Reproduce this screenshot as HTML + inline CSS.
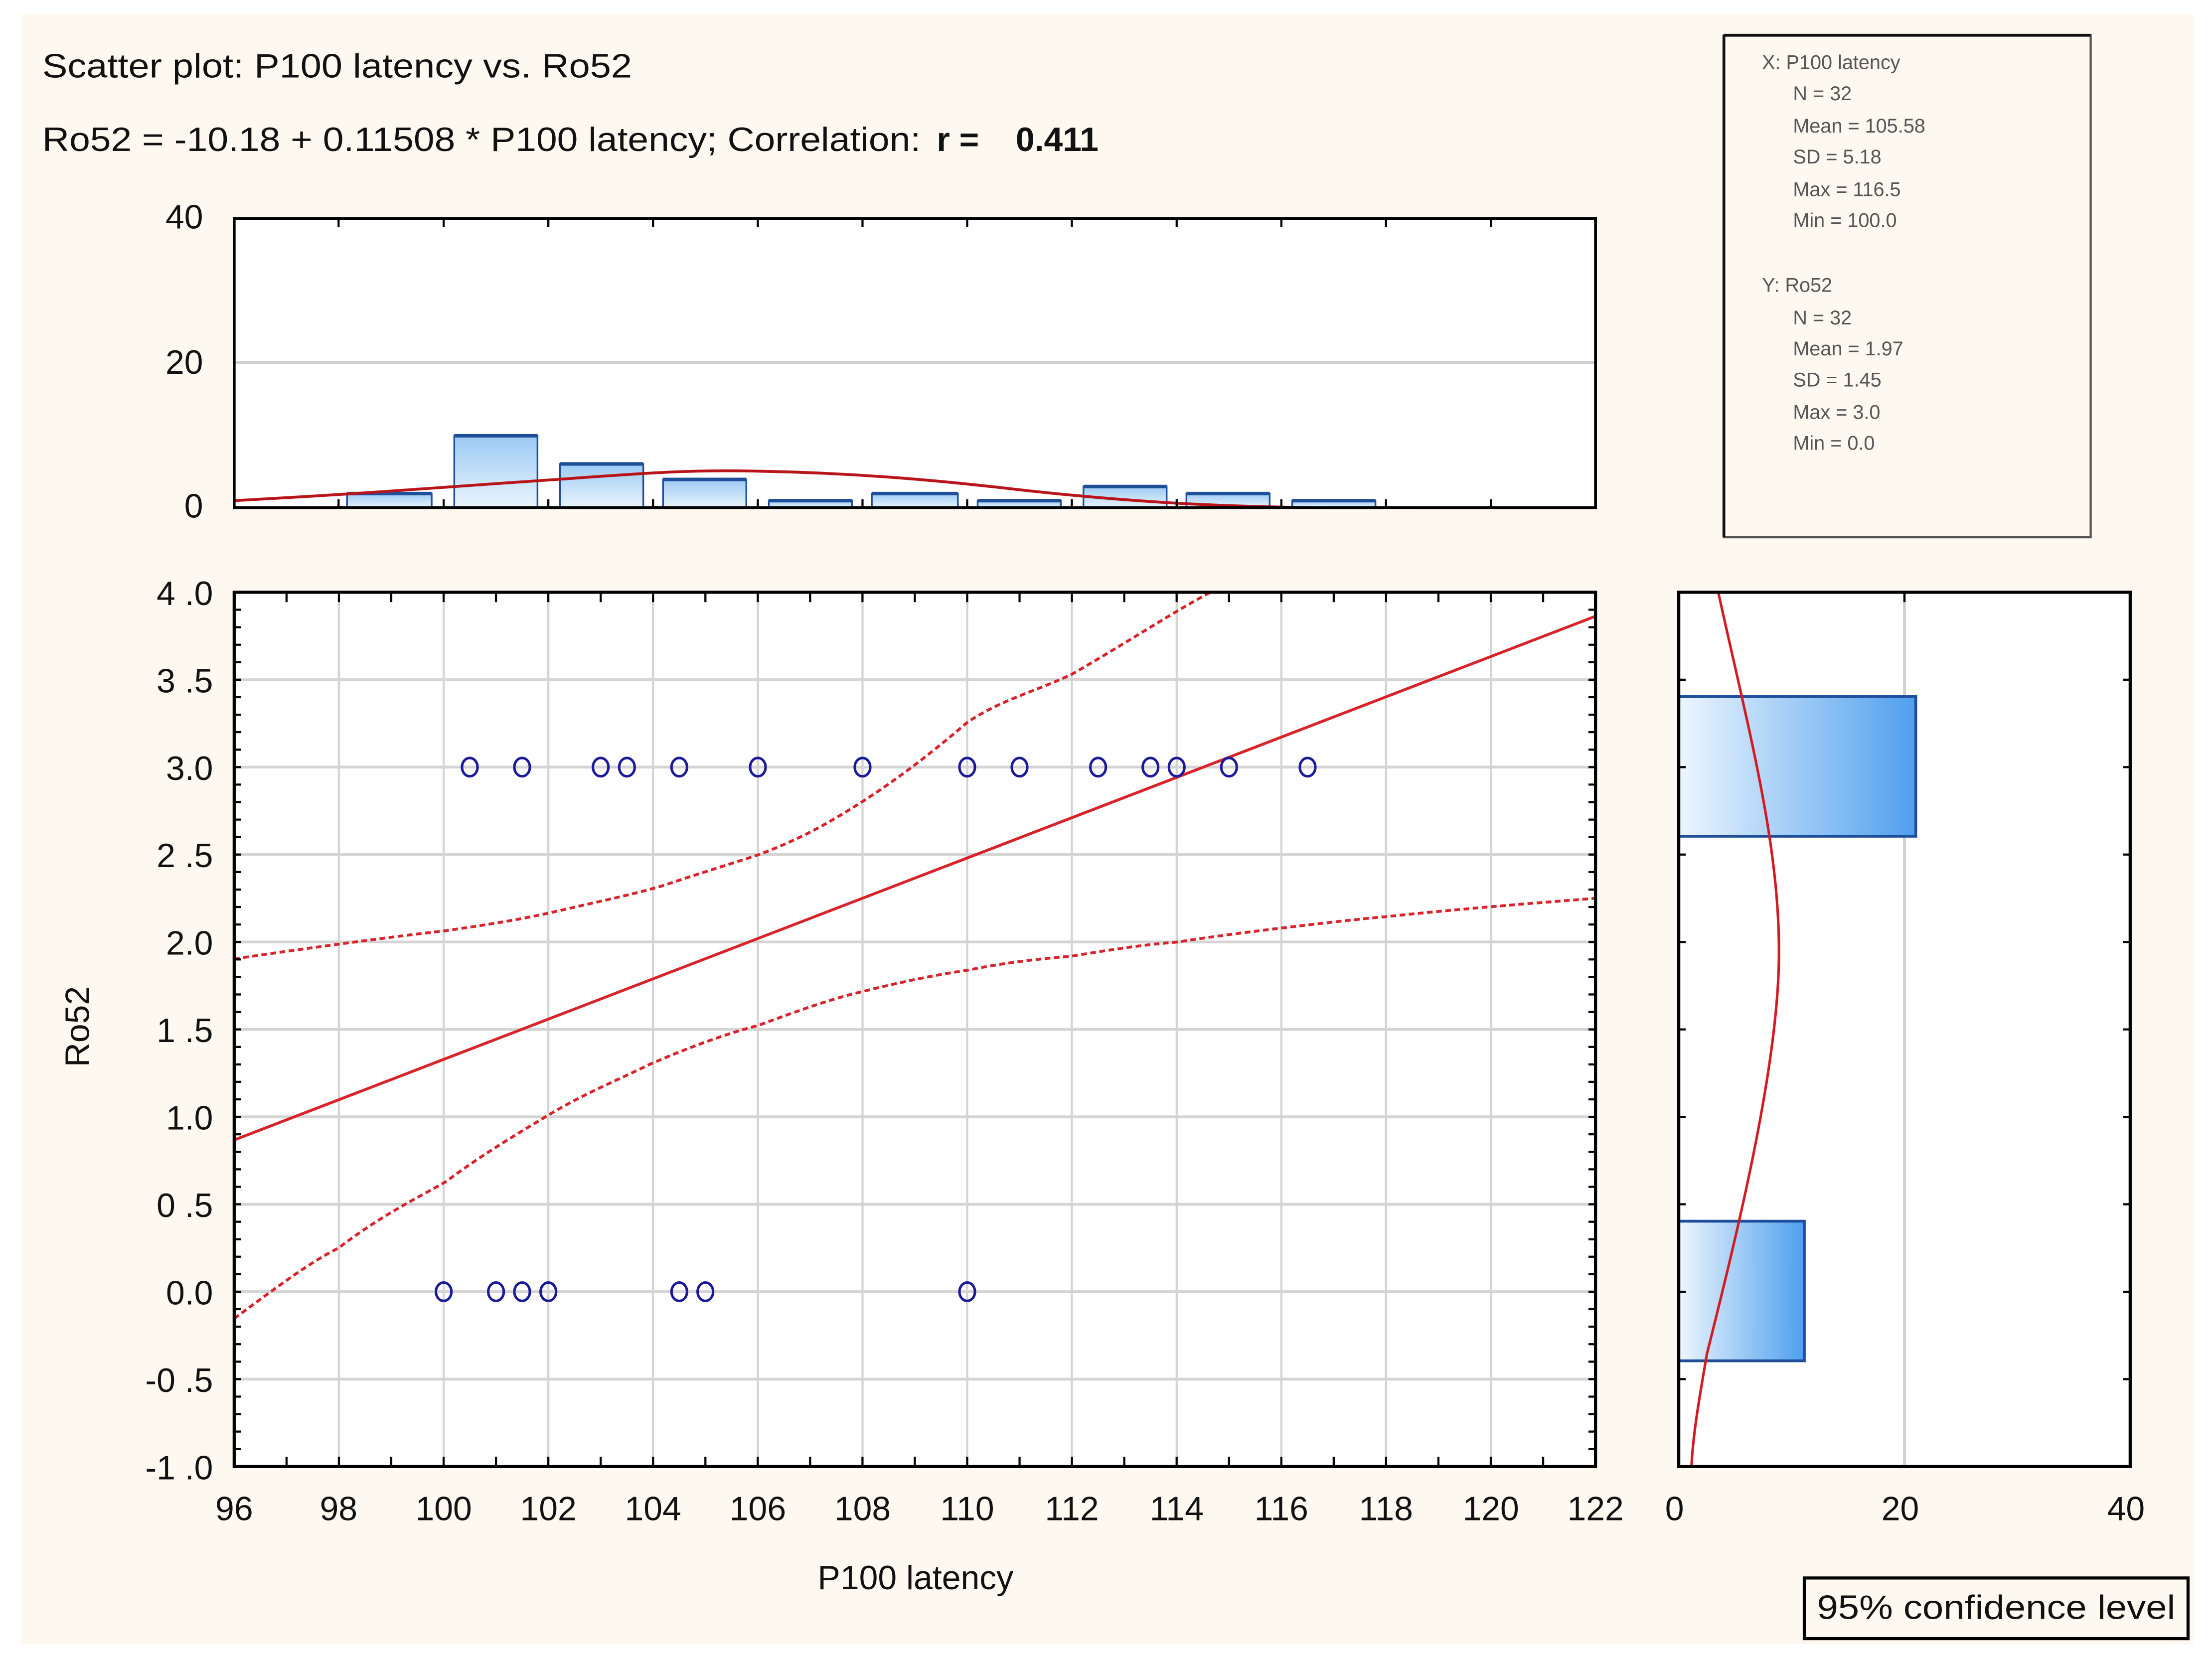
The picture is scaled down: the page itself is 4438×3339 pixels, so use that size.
<!DOCTYPE html>
<html><head><meta charset="utf-8"><style>
html,body{margin:0;padding:0;background:#fff;}
svg{display:block;}
text{font-family:"Liberation Sans",Arial,sans-serif;}
</style></head><body>
<svg width="4438" height="3339" viewBox="0 0 1568 1180" preserveAspectRatio="none" xmlns="http://www.w3.org/2000/svg">
<defs>
<linearGradient id="gv" x1="0" y1="0" x2="0" y2="1"><stop offset="0" stop-color="#9ccaf4"/><stop offset="1" stop-color="#eaf4fd"/></linearGradient>
<linearGradient id="gh" x1="0" y1="0" x2="1" y2="0"><stop offset="0" stop-color="#eef6fe"/><stop offset="1" stop-color="#4f9fee"/></linearGradient>
</defs>
<rect x="0" y="0" width="1568" height="1180" fill="#fff"/>
<rect x="15" y="10" width="1540" height="1156" fill="#fdf9f0"/>

<text x="30" y="55" font-size="24" fill="#111" textLength="418" lengthAdjust="spacingAndGlyphs">Scatter plot: P100 latency vs. Ro52</text>
<text x="30" y="107" font-size="24" fill="#111">
<tspan textLength="630" lengthAdjust="spacingAndGlyphs">Ro52 = -10.18 + 0.11508 * P100 latency; Correlation: </tspan><tspan font-weight="bold" x="664">r =</tspan><tspan font-weight="bold" x="720">0.411</tspan></text>

<!-- stats box -->
<rect x="1222" y="25" width="260" height="356" fill="#fdf9f0" stroke="#555" stroke-width="1.5"/>
<line x1="1222" y1="25" x2="1482" y2="25" stroke="#111" stroke-width="2"/>
<line x1="1222" y1="25" x2="1222" y2="381" stroke="#111" stroke-width="2"/>
<g font-size="14" fill="#555">
<text x="1249" y="49">X:  P100 latency</text>
<text x="1271" y="71">N = 32</text>
<text x="1271" y="94">Mean = 105.58</text>
<text x="1271" y="116">SD = 5.18</text>
<text x="1271" y="139">Max = 116.5</text>
<text x="1271" y="161">Min = 100.0</text>
<text x="1249" y="207">Y:  Ro52</text>
<text x="1271" y="230">N = 32</text>
<text x="1271" y="252">Mean = 1.97</text>
<text x="1271" y="274">SD = 1.45</text>
<text x="1271" y="297">Max = 3.0</text>
<text x="1271" y="319">Min = 0.0</text>
</g>

<!-- top histogram -->
<rect x="166" y="155" width="965" height="205" fill="#fff"/>
<line x1="166" y1="257" x2="1131" y2="257" stroke="#d0d0d0" stroke-width="2"/>
<g fill="url(#gv)" stroke="#1f4f9a" stroke-width="1.2">
<rect x="246" y="350" width="60" height="10"/>
<rect x="322" y="309" width="59" height="51"/>
<rect x="397" y="329" width="59" height="31"/>
<rect x="470" y="340" width="59" height="20"/>
<rect x="545" y="355" width="59" height="5"/>
<rect x="618" y="350" width="61" height="10"/>
<rect x="693" y="355" width="59" height="5"/>
<rect x="768" y="345" width="59" height="15"/>
<rect x="841" y="350" width="59" height="10"/>
<rect x="916" y="355" width="59" height="5"/>
</g>
<g stroke="#1f4f9a" stroke-width="2.5">
<line x1="246" y1="350" x2="306" y2="350"/><line x1="322" y1="309" x2="381" y2="309"/><line x1="397" y1="329" x2="456" y2="329"/><line x1="470" y1="340" x2="529" y2="340"/><line x1="545" y1="355" x2="604" y2="355"/><line x1="618" y1="350" x2="679" y2="350"/><line x1="693" y1="355" x2="752" y2="355"/><line x1="768" y1="345" x2="827" y2="345"/><line x1="841" y1="350" x2="900" y2="350"/><line x1="916" y1="355" x2="975" y2="355"/>
</g>
<path d="M166 355 C260 350 320 345 380 341 C440 337 480 333 530 334 C600 335 660 340 720 347 C800 356 860 359 930 360 L1003 360" fill="none" stroke="#b8141a" stroke-width="2"/>
<rect x="166" y="155" width="965" height="205" fill="none" stroke="#000" stroke-width="2"/>
<path d="M240 156v5M314.5 156v5M388.7 156v5M462.9 156v5M537.2 156v5M611.4 156v5M685.6 156v5M759.8 156v5M834.1 156v5M908.3 156v5M982.5 156v5M1056.8 156v5M240 359v-5M314.5 359v-5M388.7 359v-5M462.9 359v-5M537.2 359v-5M611.4 359v-5M685.6 359v-5M759.8 359v-5M834.1 359v-5M908.3 359v-5M982.5 359v-5M1056.8 359v-5" stroke="#000" stroke-width="1.5"/>
<g font-size="24" fill="#111" text-anchor="end">
<text x="144" y="162">40</text><text x="144" y="265">20</text><text x="144" y="367">0</text>
</g>

<!-- main plot -->
<rect x="166" y="420" width="965" height="620" fill="#fff"/>
<g stroke="#d4d4d4" stroke-width="1.5">
<path d="M240.2 420V1040M314.5 420V1040M388.7 420V1040M462.9 420V1040M537.2 420V1040M611.4 420V1040M685.6 420V1040M759.8 420V1040M834.1 420V1040M908.3 420V1040M982.5 420V1040M1056.8 420V1040"/>
<path d="M166 482H1131M166 544H1131M166 606H1131M166 668H1131M166 730H1131M166 792H1131M166 854H1131M166 916H1131M166 978H1131" stroke-width="2"/>
</g>
<g fill="none" stroke="#d8232a">
<line x1="166" y1="808.4" x2="1131" y2="437" stroke-width="2"/>
<path d="M166 680 C220 672 280 664 316 660 C350 655 370 652 400 645 C430 638 450 634 470 628 C500 618 520 612 538 606 C570 594 590 582 612 568 C640 550 665 530 686 512 C710 496 735 490 760 478 C800 455 830 435 858 420" stroke-width="2" stroke-dasharray="4 2.5"/>
<path d="M166 935 C200 910 220 895 240 885 C270 862 295 850 316 838 C340 820 365 805 390 790 C415 775 440 765 460 755 C490 742 515 733 538 727 C565 717 590 708 612 703 C640 696 665 691 686 688 C710 683 735 680 760 678 C790 673 810 670 835 668 C860 664 885 661 909 658 C935 655 960 652 983 650 C1030 645 1080 641 1131 637" stroke-width="2" stroke-dasharray="4 2.5"/>
</g>
<g fill="none" stroke="#1a1a9a" stroke-width="1.8">
<ellipse cx="333" cy="544" rx="5.5" ry="6.5"/><ellipse cx="370.1" cy="544" rx="5.5" ry="6.5"/><ellipse cx="425.8" cy="544" rx="5.5" ry="6.5"/><ellipse cx="444.4" cy="544" rx="5.5" ry="6.5"/><ellipse cx="481.5" cy="544" rx="5.5" ry="6.5"/><ellipse cx="537.2" cy="544" rx="5.5" ry="6.5"/><ellipse cx="611.4" cy="544" rx="5.5" ry="6.5"/><ellipse cx="685.6" cy="544" rx="5.5" ry="6.5"/><ellipse cx="722.7" cy="544" rx="5.5" ry="6.5"/><ellipse cx="778.4" cy="544" rx="5.5" ry="6.5"/><ellipse cx="815.5" cy="544" rx="5.5" ry="6.5"/><ellipse cx="834.1" cy="544" rx="5.5" ry="6.5"/><ellipse cx="871.2" cy="544" rx="5.5" ry="6.5"/><ellipse cx="926.9" cy="544" rx="5.5" ry="6.5"/>
<ellipse cx="314.5" cy="916" rx="5.5" ry="6.5"/><ellipse cx="351.6" cy="916" rx="5.5" ry="6.5"/><ellipse cx="370.1" cy="916" rx="5.5" ry="6.5"/><ellipse cx="388.7" cy="916" rx="5.5" ry="6.5"/><ellipse cx="481.5" cy="916" rx="5.5" ry="6.5"/><ellipse cx="500" cy="916" rx="5.5" ry="6.5"/><ellipse cx="685.6" cy="916" rx="5.5" ry="6.5"/>
</g>
<rect x="166" y="420" width="965" height="620" fill="none" stroke="#000" stroke-width="2.2"/>
<!-- left minor ticks -->
<path d="M166 420h5m-5 12.4h5m-5 12.4h5m-5 12.4h5m-5 12.4h5m-5 12.4h5m-5 12.4h5m-5 12.4h5m-5 12.4h5m-5 12.4h5m-5 12.4h5m-5 12.4h5m-5 12.4h5m-5 12.4h5m-5 12.4h5m-5 12.4h5m-5 12.4h5m-5 12.4h5m-5 12.4h5m-5 12.4h5m-5 12.4h5m-5 12.4h5m-5 12.4h5m-5 12.4h5m-5 12.4h5m-5 12.4h5m-5 12.4h5m-5 12.4h5m-5 12.4h5m-5 12.4h5m-5 12.4h5m-5 12.4h5m-5 12.4h5m-5 12.4h5m-5 12.4h5m-5 12.4h5m-5 12.4h5m-5 12.4h5m-5 12.4h5m-5 12.4h5m-5 12.4h5m-5 12.4h5m-5 12.4h5m-5 12.4h5m-5 12.4h5m-5 12.4h5m-5 12.4h5m-5 12.4h5m-5 12.4h5m-5 12.4h5" stroke="#000" stroke-width="1.5"/>
<path d="M1131 420h-5m5 12.4h-5m5 12.4h-5m5 12.4h-5m5 12.4h-5m5 12.4h-5m5 12.4h-5m5 12.4h-5m5 12.4h-5m5 12.4h-5m5 12.4h-5m5 12.4h-5m5 12.4h-5m5 12.4h-5m5 12.4h-5m5 12.4h-5m5 12.4h-5m5 12.4h-5m5 12.4h-5m5 12.4h-5m5 12.4h-5m5 12.4h-5m5 12.4h-5m5 12.4h-5m5 12.4h-5m5 12.4h-5m5 12.4h-5m5 12.4h-5m5 12.4h-5m5 12.4h-5m5 12.4h-5m5 12.4h-5m5 12.4h-5m5 12.4h-5m5 12.4h-5m5 12.4h-5m5 12.4h-5m5 12.4h-5m5 12.4h-5m5 12.4h-5m5 12.4h-5m5 12.4h-5m5 12.4h-5m5 12.4h-5m5 12.4h-5m5 12.4h-5m5 12.4h-5m5 12.4h-5m5 12.4h-5m5 12.4h-5" stroke="#000" stroke-width="1.5"/>
<!-- top/bottom ticks every 1 unit -->
<path d="M166 421v6m37.115 -6v6m37.115 -6v6m37.115 -6v6m37.115 -6v6m37.115 -6v6m37.115 -6v6m37.115 -6v6m37.115 -6v6m37.115 -6v6m37.115 -6v6m37.115 -6v6m37.115 -6v6m37.115 -6v6m37.115 -6v6m37.115 -6v6m37.115 -6v6m37.115 -6v6m37.115 -6v6m37.115 -6v6m37.115 -6v6m37.115 -6v6m37.115 -6v6m37.115 -6v6m37.115 -6v6m37.115 -6v6" stroke="#000" stroke-width="1.5"/>
<path d="M166 1039v-6m37.115 6v-6m37.115 6v-6m37.115 6v-6m37.115 6v-6m37.115 6v-6m37.115 6v-6m37.115 6v-6m37.115 6v-6m37.115 6v-6m37.115 6v-6m37.115 6v-6m37.115 6v-6m37.115 6v-6m37.115 6v-6m37.115 6v-6m37.115 6v-6m37.115 6v-6m37.115 6v-6m37.115 6v-6m37.115 6v-6m37.115 6v-6m37.115 6v-6m37.115 6v-6m37.115 6v-6m37.115 6v-6" stroke="#000" stroke-width="1.5"/>
<g font-size="24" fill="#111" text-anchor="end">
<text x="151" y="429">4 .0</text><text x="151" y="491">3 .5</text><text x="151" y="553">3.0</text><text x="151" y="615">2 .5</text><text x="151" y="677">2.0</text><text x="151" y="739">1 .5</text><text x="151" y="801">1.0</text><text x="151" y="863">0 .5</text><text x="151" y="925">0.0</text><text x="151" y="987">-0 .5</text><text x="151" y="1049">-1 .0</text>
</g>
<g font-size="24" fill="#111" text-anchor="middle">
<text x="166" y="1078">96</text><text x="240" y="1078">98</text><text x="314.5" y="1078">100</text><text x="388.7" y="1078">102</text><text x="462.9" y="1078">104</text><text x="537.2" y="1078">106</text><text x="611.4" y="1078">108</text><text x="685.6" y="1078">110</text><text x="759.8" y="1078">112</text><text x="834.1" y="1078">114</text><text x="908.3" y="1078">116</text><text x="982.5" y="1078">118</text><text x="1056.8" y="1078">120</text><text x="1131" y="1078">122</text>
<text x="649" y="1127">P100 latency</text>
<text x="1187" y="1078">0</text><text x="1347" y="1078">20</text><text x="1507" y="1078">40</text>
</g>
<text transform="translate(63 728) rotate(-90)" font-size="24" fill="#111" text-anchor="middle">Ro52</text>

<!-- right histogram -->
<rect x="1190" y="420" width="320" height="620" fill="#fff"/>
<line x1="1350" y1="420" x2="1350" y2="1040" stroke="#d0d0d0" stroke-width="2"/>
<rect x="1190" y="494" width="168" height="99" fill="url(#gh)" stroke="#1f4f9a" stroke-width="2"/>
<rect x="1190" y="866" width="89" height="99" fill="url(#gh)" stroke="#1f4f9a" stroke-width="2"/>
<path d="M1218 420 C1240 520 1262 600 1261 680 C1260 760 1230 880 1210 960 C1203 1000 1200 1020 1199 1040" fill="none" stroke="#d21a20" stroke-width="1.8"/>
<rect x="1190" y="420" width="320" height="620" fill="none" stroke="#000" stroke-width="2.2"/>
<path d="M1190 482h5M1190 544h5M1190 606h5M1190 668h5M1190 730h5M1190 792h5M1190 854h5M1190 916h5M1190 978h5M1510 482h-5M1510 544h-5M1510 606h-5M1510 668h-5M1510 730h-5M1510 792h-5M1510 854h-5M1510 916h-5M1510 978h-5M1350 421v6" stroke="#000" stroke-width="1.5"/>

<!-- confidence box -->
<rect x="1279" y="1119" width="272" height="43" fill="#fdf9f0" stroke="#000" stroke-width="2.2"/>
<text x="1288" y="1148" font-size="24" fill="#111" textLength="254" lengthAdjust="spacingAndGlyphs">95% confidence level</text>
</svg>
</body></html>
